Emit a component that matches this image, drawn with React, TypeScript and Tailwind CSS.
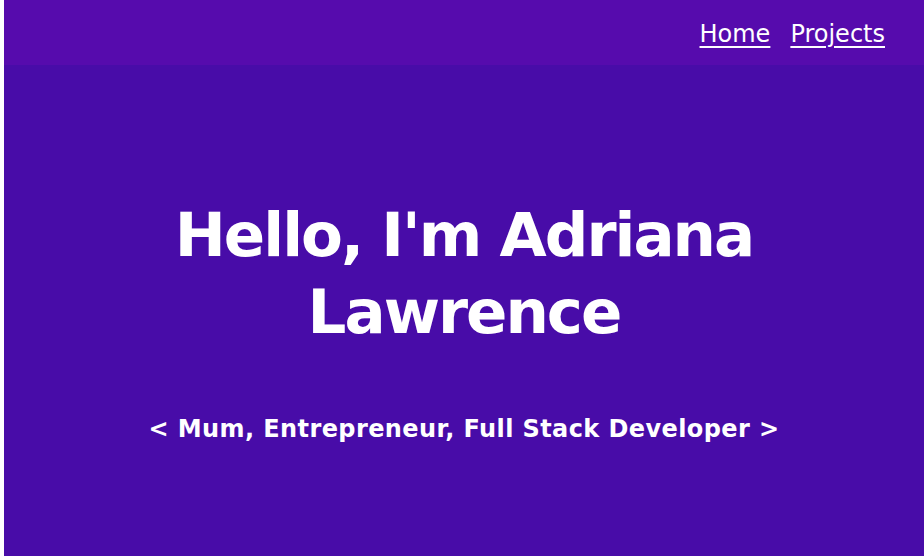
import React from "react";

const links = ["Home", "Projects"];

export default function App() {
  return (
    <div className="min-h-[558px] bg-white pl-[4px] pb-[2px] font-['DejaVu_Sans',sans-serif]">
      <header className="flex h-[65px] items-center justify-end gap-[20px] bg-[#560bad] pr-[39px] pt-[2px]">
        {links.map((l) => (
          <a key={l} href="#" className="text-[24px] text-white underline underline-offset-[4px] decoration-[2px]">
            {l}
          </a>
        ))}
      </header>
      <main className="flex h-[491px] flex-col items-center bg-[#480ca8] pt-[131px] text-center text-white">
        <h1 className="max-w-[640px] text-[61px] font-bold leading-[77px] tracking-[-2px]">Hello, I'm Adriana Lawrence</h1>
        <p className="mt-[61px] text-[24px] font-bold tracking-[0.4px]">&lt; Mum, Entrepreneur, Full Stack Developer &gt;</p>
      </main>
    </div>
  );
}
